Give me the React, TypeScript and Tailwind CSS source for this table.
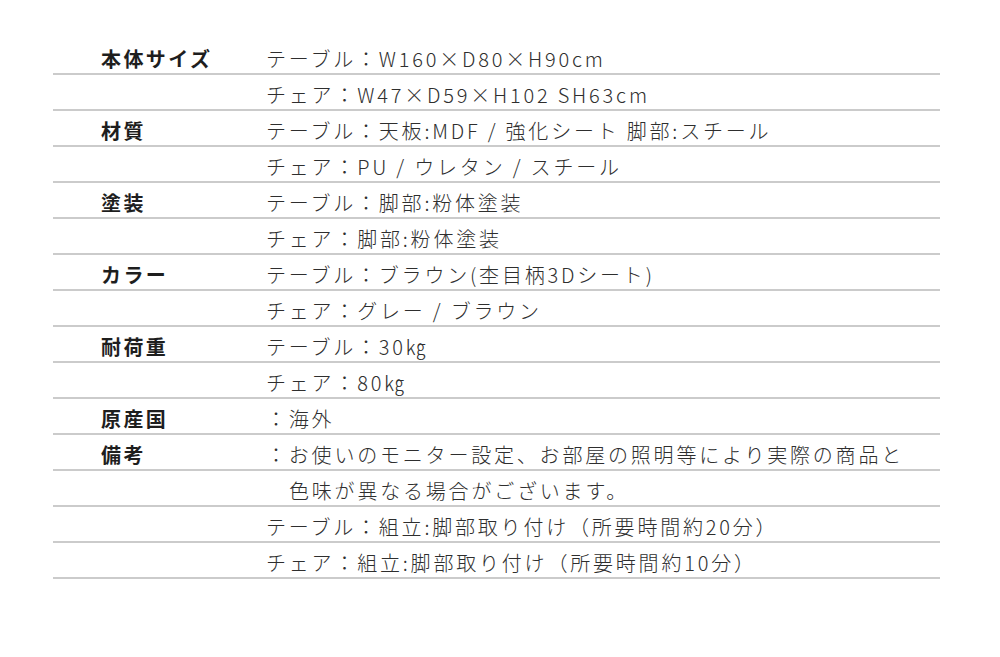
type SpecRow = {
  label?: string
  value: string
  indent?: boolean
}

const rows: SpecRow[] = [
  { label: '本体サイズ', value: 'テーブル：W160×D80×H90cm' },
  { value: 'チェア：W47×D59×H102 SH63cm' },
  { label: '材質', value: 'テーブル：天板:MDF / 強化シート 脚部:スチール' },
  { value: 'チェア：PU / ウレタン / スチール' },
  { label: '塗装', value: 'テーブル：脚部:粉体塗装' },
  { value: 'チェア：脚部:粉体塗装' },
  { label: 'カラー', value: 'テーブル：ブラウン(杢目柄3Dシート)' },
  { value: 'チェア：グレー / ブラウン' },
  { label: '耐荷重', value: 'テーブル：30㎏' },
  { value: 'チェア：80㎏' },
  { label: '原産国', value: '：海外' },
  { label: '備考', value: '：お使いのモニター設定、お部屋の照明等により実際の商品と' },
  { value: '色味が異なる場合がございます。', indent: true },
  { value: 'テーブル：組立:脚部取り付け（所要時間約20分）' },
  { value: 'チェア：組立:脚部取り付け（所要時間約10分）' },
]

export default function App() {
  return (
    <div
      className="w-[1000px] h-[657px] bg-white pt-[39px] pl-[53px]"
      style={{ fontFamily: '"Noto Sans CJK JP", "Noto Sans", sans-serif' }}
    >
      <div className="w-[887px]">
        {rows.map((row, i) => (
          <div
            key={i}
            className="flex items-center h-[36px] border-b-2 border-[#cbcbcb] pt-[5px]"
          >
            {/* Label */}
            <div className="w-[213px] pl-[48px] text-[20px] font-bold text-[#1e1e1e] tracking-[0.12em] leading-none">
              {row.label ?? ''}
            </div>

            {/* Value */}
            <div
              className={`flex-1 text-[20px] font-light text-[#2e2e2e] tracking-[0.14em] leading-none whitespace-nowrap ${
                row.indent ? 'pl-[23px]' : ''
              }`}
            >
              {row.value}
            </div>
          </div>
        ))}
      </div>
    </div>
  )
}
